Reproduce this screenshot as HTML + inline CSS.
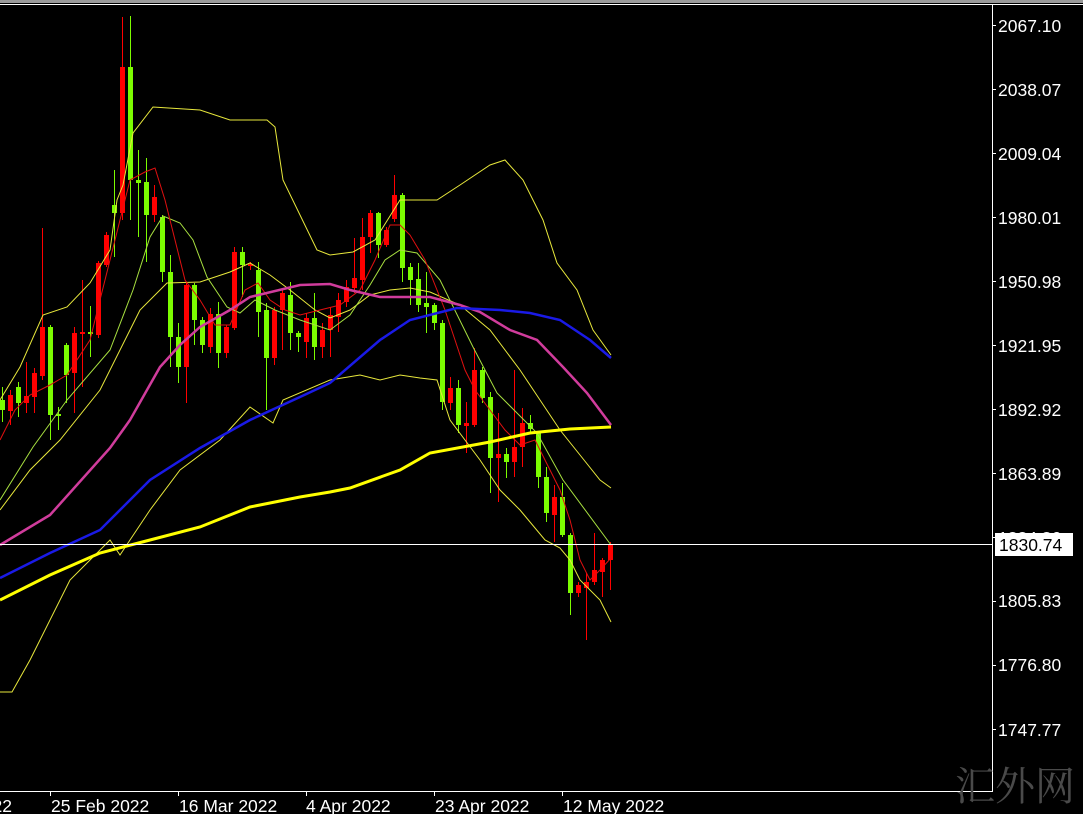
<!DOCTYPE html>
<html><head><meta charset="utf-8"><style>
html,body{margin:0;padding:0;background:#000;width:1083px;height:814px;overflow:hidden}
svg{position:absolute;left:0;top:0}
text{font-family:"Liberation Sans","Noto Sans CJK SC",sans-serif;fill:#fff}
</style></head><body>
<svg width="1083" height="814" viewBox="0 0 1083 814">
<rect x="0" y="0" width="1083" height="3" fill="#9a9a9a"/>
<line x1="0" y1="4.5" x2="1083" y2="4.5" stroke="#fff"/>
<line x1="992.5" y1="4" x2="992.5" y2="792" stroke="#fff"/>
<line x1="0" y1="791.5" x2="993" y2="791.5" stroke="#fff"/>

<path stroke="#ff0000" stroke-width="1" fill="none" d="
M10.5 390V425 M26.5 362V413 M34.5 368V413 M42.5 228V380 M74.5 327V413 M82.5 280V387 M98.5 261V338 M106.5 232V267
M122.5 17V220 M154.5 185V222 M186.5 282V403 M210.5 308V353 M226.5 325V358 M234.5 247V330 M250.5 262V270
M274.5 307V365 M282.5 290V350 M306.5 313V358 M322.5 323V358 M330.5 307V357 M338.5 293V332 M346.5 280V307
M354.5 238V293 M362.5 218V290 M370.5 210V253 M386.5 227V247 M394.5 175V222 M450.5 377V410 M466.5 402V453
M474.5 348V427 M498.5 413V502 M514.5 370V477 M522.5 408V467 M554.5 485V542 M578.5 582V597 M586.5 573V640
M594.5 533V585 M602.5 558V597 M610.5 542V590"/>
<path stroke="#7cfc00" stroke-width="1" fill="none" d="
M2.5 387V422 M18.5 382V417 M50.5 325V440 M58.5 407V430 M66.5 343V403 M90.5 306V357 M114.5 170V257
M130.5 16V220 M138.5 150V237 M146.5 158V262 M162.5 215V282 M170.5 255V367 M178.5 323V383 M194.5 283V345
M202.5 317V353 M218.5 302V368 M242.5 247V297 M258.5 262V337 M266.5 303V410 M290.5 282V350 M298.5 331V352
M314.5 293V360 M378.5 212V258 M402.5 193V282 M410.5 263V305 M418.5 263V312 M426.5 272V333 M434.5 303V330
M442.5 320V410 M458.5 380V433 M482.5 367V403 M490.5 392V493 M506.5 448V478 M530.5 415V432 M538.5 432V488
M546.5 467V522 M562.5 483V537 M570.5 533V615"/>
<g fill="#ff0000">
<rect x="8" y="395" width="5" height="16"/><rect x="24" y="396" width="5" height="7"/><rect x="32" y="373" width="5" height="24"/>
<rect x="40" y="327" width="5" height="49"/><rect x="72" y="333" width="5" height="40"/><rect x="80" y="332" width="5" height="2"/>
<rect x="96" y="263" width="5" height="72"/><rect x="104" y="235" width="5" height="30"/><rect x="120" y="67" width="5" height="146"/>
<rect x="152" y="197" width="5" height="18"/><rect x="184" y="285" width="5" height="82"/><rect x="208" y="314" width="5" height="33"/>
<rect x="224" y="327" width="5" height="26"/><rect x="232" y="252" width="5" height="76"/><rect x="248" y="264" width="5" height="2"/>
<rect x="272" y="310" width="5" height="48"/><rect x="280" y="293" width="5" height="17"/><rect x="304" y="318" width="5" height="24"/>
<rect x="320" y="330" width="5" height="17"/><rect x="328" y="315" width="5" height="15"/><rect x="336" y="300" width="5" height="17"/>
<rect x="344" y="287" width="5" height="15"/><rect x="352" y="278" width="5" height="10"/><rect x="360" y="237" width="5" height="43"/>
<rect x="368" y="213" width="5" height="24"/><rect x="384" y="230" width="5" height="15"/><rect x="392" y="195" width="5" height="24"/>
<rect x="448" y="388" width="5" height="15"/><rect x="464" y="423" width="5" height="3"/><rect x="472" y="370" width="5" height="55"/>
<rect x="496" y="454" width="5" height="4"/><rect x="512" y="447" width="5" height="15"/><rect x="520" y="423" width="5" height="24"/>
<rect x="552" y="497" width="5" height="18"/><rect x="576" y="585" width="5" height="8"/><rect x="584" y="582" width="5" height="6"/>
<rect x="592" y="570" width="5" height="12"/><rect x="600" y="560" width="5" height="12"/><rect x="608" y="545" width="5" height="15"/>
</g>
<g fill="#7cfc00">
<rect x="0" y="400" width="5" height="10"/><rect x="16" y="387" width="5" height="16"/><rect x="48" y="327" width="5" height="88"/>
<rect x="56" y="414" width="5" height="2"/><rect x="64" y="345" width="5" height="30"/><rect x="88" y="332" width="5" height="2"/>
<rect x="112" y="205" width="5" height="8"/><rect x="128" y="67" width="5" height="113"/><rect x="136" y="180" width="5" height="3"/>
<rect x="144" y="182" width="5" height="33"/><rect x="160" y="217" width="5" height="55"/><rect x="168" y="272" width="5" height="65"/>
<rect x="176" y="337" width="5" height="30"/><rect x="192" y="285" width="5" height="35"/><rect x="200" y="320" width="5" height="25"/>
<rect x="216" y="314" width="5" height="39"/><rect x="240" y="252" width="5" height="13"/><rect x="256" y="270" width="5" height="42"/>
<rect x="264" y="310" width="5" height="48"/><rect x="288" y="295" width="5" height="38"/><rect x="296" y="333" width="5" height="4"/>
<rect x="312" y="318" width="5" height="29"/><rect x="376" y="213" width="5" height="32"/><rect x="400" y="195" width="5" height="73"/>
<rect x="408" y="267" width="5" height="13"/><rect x="416" y="279" width="5" height="26"/><rect x="424" y="303" width="5" height="4"/>
<rect x="432" y="305" width="5" height="18"/><rect x="440" y="323" width="5" height="79"/><rect x="456" y="388" width="5" height="37"/>
<rect x="480" y="370" width="5" height="28"/><rect x="488" y="397" width="5" height="61"/><rect x="504" y="454" width="5" height="8"/>
<rect x="528" y="423" width="5" height="6"/><rect x="536" y="433" width="5" height="44"/><rect x="544" y="477" width="5" height="36"/>
<rect x="560" y="497" width="5" height="38"/><rect x="568" y="535" width="5" height="58"/>
</g>

<g fill="none" stroke="#e8e83c" stroke-width="1">
<polyline points="0,400 20,367 43,315 67,307 90,283 110,250 117,200 123,185 133,133 153,107 200,110 230,120 267,120 275,127 283,180 300,215 317,250 330,255 353,252 375,240 400,200 437,200 460,185 490,165 505,160 523,180 543,220 557,263 577,290 593,330 611,355"/>
<polyline points="0,510 30,470 60,440 100,390 140,310 167,283 200,282 230,272 250,263 270,275 290,290 315,310 330,318 350,310 370,295 390,290 410,288 430,292 460,305 490,330 520,370 540,400 560,430 580,455 600,480 611,488"/>
<polyline points="0,692 12,692 30,660 70,580 110,540 120,555 150,510 180,470 220,440 250,407 273,423 283,400 330,380 360,375 380,380 400,375 420,378 437,380 450,420 480,460 500,490 520,510 545,540 560,548 570,560 580,580 600,600 611,622"/>
</g>
<polyline fill="none" stroke="#a8e040" stroke-width="1" points="0,500 33,447 67,400 110,350 133,290 150,237 163,216 180,223 193,240 207,277 227,307 240,313 255,300 275,310 300,320 330,330 350,315 370,285 385,260 400,250 417,253 440,280 473,347 497,393 537,433 563,480 611,545"/>
<polyline fill="none" stroke="#e01010" stroke-width="1" points="0,440 15,410 30,395 50,385 67,375 90,340 100,300 115,240 130,180 145,172 155,168 165,200 175,240 185,280 200,300 215,325 230,325 245,290 258,283 270,300 285,310 300,315 320,310 340,305 360,290 375,260 390,225 400,225 410,235 425,260 435,285 445,310 455,340 465,370 475,390 490,410 505,430 520,445 535,440 550,470 560,490 570,520 580,560 590,580 600,570 611,558"/>
<polyline fill="none" stroke="#d03c9c" stroke-width="2.5" points="0,545 50,515 110,448 130,420 160,367 180,345 200,327 230,310 250,297 300,285 330,284 350,290 380,297 430,297 460,305 480,312 510,330 537,340 563,367 587,393 611,425"/>
<polyline fill="none" stroke="#1a1ae6" stroke-width="2.5" points="0,578 50,553 100,530 150,480 200,448 250,420 300,397 330,383 380,340 410,320 457,308 500,310 530,313 560,320 590,340 611,358"/>
<polyline fill="none" stroke="#ffff00" stroke-width="3" points="0,600 50,575 100,553 150,540 200,527 250,507 300,497 330,492 350,488 400,470 430,453 490,442 530,433 570,429 611,427"/>

<line x1="0" y1="544.5" x2="993" y2="544.5" stroke="#fff"/>

<g stroke="#fff">
<path d="M992 25.5h4M992 89.5h4M992 153.5h4M992 217.5h4M992 281.5h4M992 345.5h4M992 409.5h4M992 473.5h4M992 537.5h4M992 601.5h4M992 665.5h4M992 729.5h4"/>
<path d="M50.5 791v5M178.5 791v5M306.5 791v5M434.5 791v5M562.5 791v5"/>
</g>
<g font-size="17.5">
<text x="998" y="32">2067.10</text>
<text x="998" y="96">2038.07</text>
<text x="998" y="160">2009.04</text>
<text x="998" y="224">1980.01</text>
<text x="998" y="288">1950.98</text>
<text x="998" y="352">1921.95</text>
<text x="998" y="416">1892.92</text>
<text x="998" y="480">1863.89</text>
<text x="998" y="544">1834.86</text>
<text x="998" y="607">1805.83</text>
<text x="998" y="671">1776.80</text>
<text x="998" y="736">1747.77</text>
</g>
<rect x="995" y="533" width="78" height="23" fill="#fff"/>
<text x="999" y="551" font-size="17.5" style="fill:#000">1830.74</text>

<g font-size="17.5">
<text x="-27" y="812">2022</text>
<text x="51" y="812">25 Feb 2022</text>
<text x="179" y="812">16 Mar 2022</text>
<text x="306" y="812">4 Apr 2022</text>
<text x="435" y="812">23 Apr 2022</text>
<text x="563" y="812">12 May 2022</text>
</g>
<text x="955" y="800" font-size="40" style="fill:#4a4a4a;font-family:'Noto Serif CJK SC','Noto Sans CJK SC',serif">汇外网</text>
</svg>
</body></html>
